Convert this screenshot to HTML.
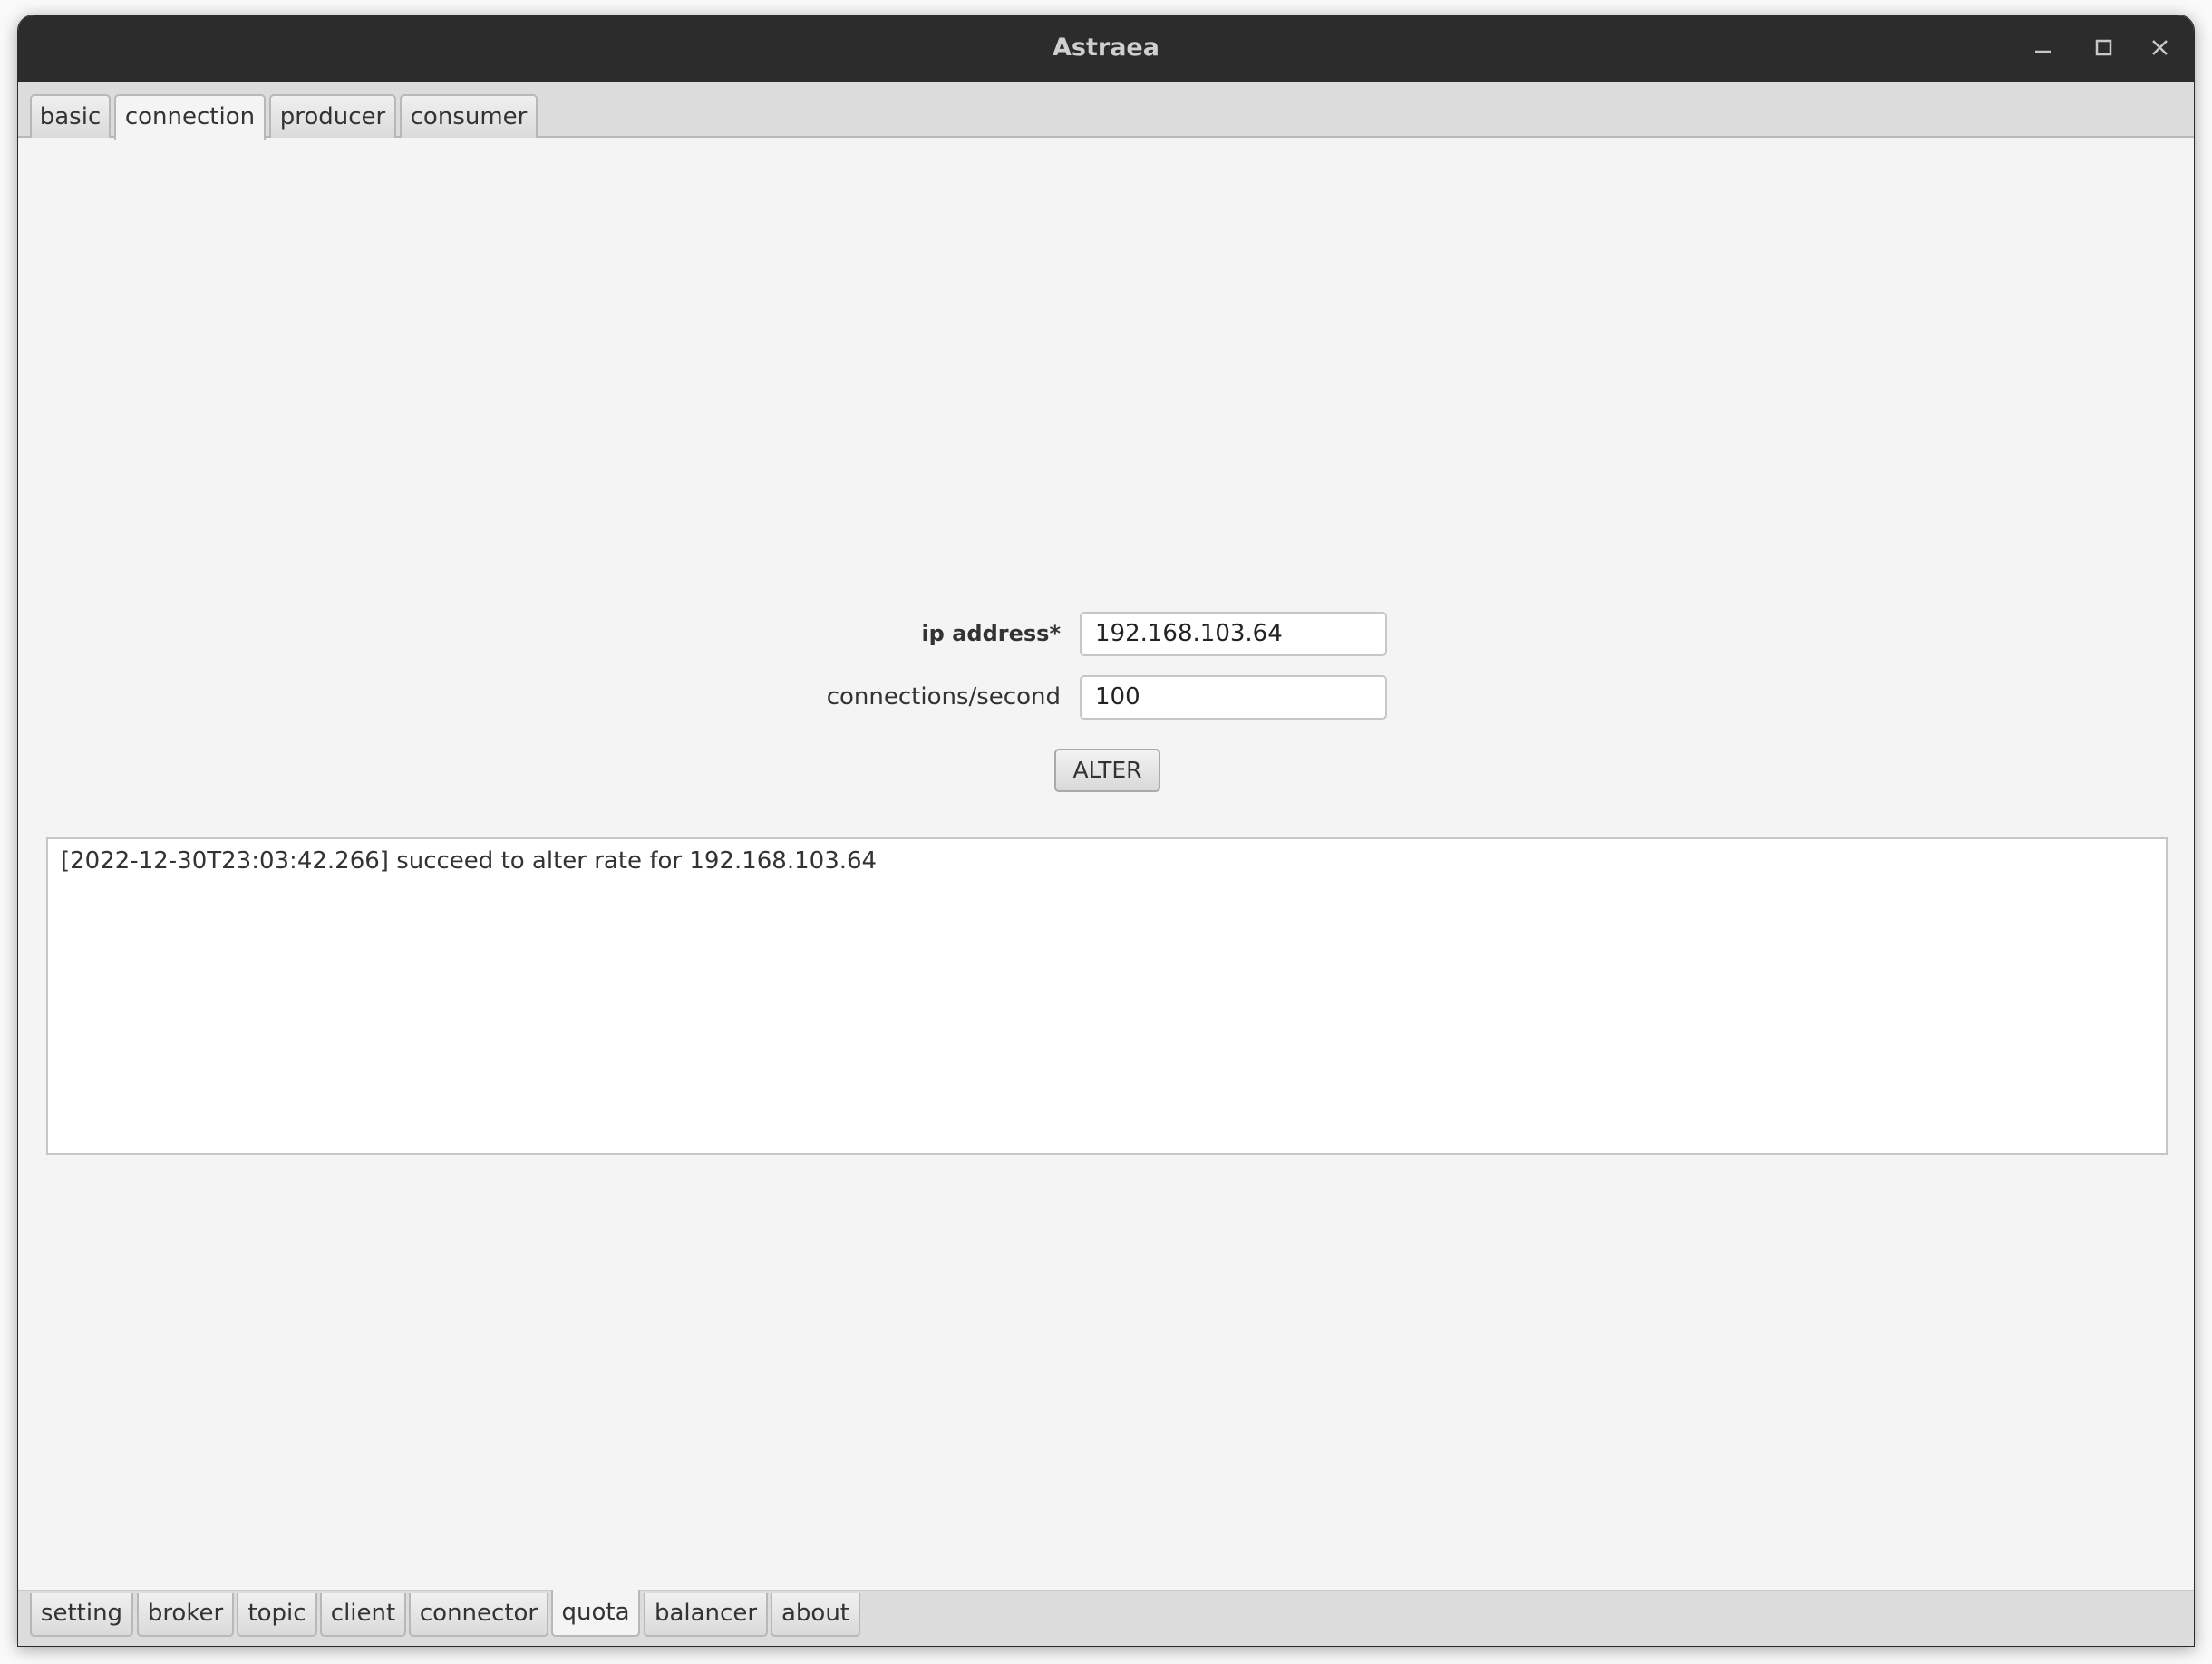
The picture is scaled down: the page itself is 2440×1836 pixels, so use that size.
<!DOCTYPE html>
<html><head><style>
html,body{margin:0;padding:0;width:2440px;height:1836px;background:#fafafa;overflow:hidden;font-family:"DejaVu Sans","Liberation Sans",sans-serif;}
.win{position:absolute;left:19px;top:16px;width:2402px;height:1801px;background:#f4f4f4;border-radius:18px 18px 0 0;box-shadow:0 3px 18px rgba(0,0,0,.35);overflow:hidden;border:1px solid #2b2b2b;box-sizing:border-box}
.title{position:absolute;left:0;top:0;right:0;height:73px;background:#2c2c2c;color:#cfcfcf;font-weight:bold;font-size:27px;text-align:center;line-height:72px;border-bottom:1px solid #1a1a1a}
.ctl{position:absolute;top:0;height:72px}
.tabbar{position:absolute;left:0;right:0;top:73px;height:62px;background:#dcdcdc;border-bottom:2px solid #b8b8b8;box-sizing:border-box}
.tab{position:absolute;top:14px;height:48px;box-sizing:border-box;border:2px solid #b8b8b8;border-bottom:none;border-radius:5px 5px 0 0;background:linear-gradient(#f0f0f0,#dadada);font-size:26px;color:#333;text-align:center;line-height:46px}
.tab.sel{background:#f4f4f4;height:50px}
.btabbar{position:absolute;left:0;right:0;top:1737px;height:64px;background:#dcdcdc;border-top:2px solid #c8c8c8;box-sizing:border-box}
.btab{position:absolute;top:2px;height:48px;box-sizing:border-box;border:2px solid #b8b8b8;border-top:none;border-radius:0 0 5px 5px;background:linear-gradient(#f0f0f0,#dadada);font-size:26px;color:#333;text-align:center;line-height:44px}
.btab.sel{background:#f4f4f4;top:-2px;height:52px;line-height:50px}
.lbl{position:absolute;font-size:26px;color:#333;text-align:right;line-height:48px}
.inp{position:absolute;background:#fff;border:2px solid #c6c6c6;border-radius:5px;box-sizing:border-box;font-size:26px;color:#222;line-height:44px;padding-left:15px}
.btn{position:absolute;left:1143px;top:809px;width:117px;height:48px;box-sizing:border-box;border:2px solid #aaa;border-radius:5px;background:linear-gradient(#f2f2f2,#d9d9d9);font-size:25px;color:#333;text-align:center;line-height:44px}
.log{position:absolute;left:31px;top:907px;width:2340px;height:350px;background:#fff;border:2px solid #c6c6c6;box-sizing:border-box;font-size:26px;color:#333;padding:8px 14px;line-height:32px}
</style></head><body>
<div class="win">
<div class="title">Astraea
<svg class="ctl" style="left:2206px" width="180" height="72"><g stroke="#c8c8c8" stroke-width="2.5" fill="none"><line x1="19" y1="40" x2="36" y2="40"/><rect x="87" y="28" width="15" height="15"/><line x1="149" y1="28" x2="164" y2="43"/><line x1="164" y1="28" x2="149" y2="43"/></g></svg>
</div>
<div class="tabbar">
<div class="tab" style="left:13px;width:89px">basic</div>
<div class="tab sel" style="left:106px;width:167px">connection</div>
<div class="tab" style="left:277px;width:140px">producer</div>
<div class="tab" style="left:421px;width:152px">consumer</div>
</div>
<div class="lbl" style="left:700px;width:450px;top:658px;font-weight:bold;font-size:24px">ip address*</div>
<div class="inp" style="left:1171px;top:658px;width:339px;height:49px">192.168.103.64</div>
<div class="lbl" style="left:700px;width:450px;top:728px">connections/second</div>
<div class="inp" style="left:1171px;top:728px;width:339px;height:49px">100</div>
<div class="btn">ALTER</div>
<div class="log">[2022-12-30T23:03:42.266] succeed to alter rate for 192.168.103.64</div>
<div class="btabbar">
<div class="btab" style="left:13px;width:114px">setting</div>
<div class="btab" style="left:131px;width:107px">broker</div>
<div class="btab" style="left:241px;width:89px">topic</div>
<div class="btab" style="left:333px;width:95px">client</div>
<div class="btab" style="left:431px;width:154px">connector</div>
<div class="btab sel" style="left:588px;width:98px">quota</div>
<div class="btab" style="left:690px;width:137px">balancer</div>
<div class="btab" style="left:830px;width:99px">about</div>
</div>
</div>
</body></html>
